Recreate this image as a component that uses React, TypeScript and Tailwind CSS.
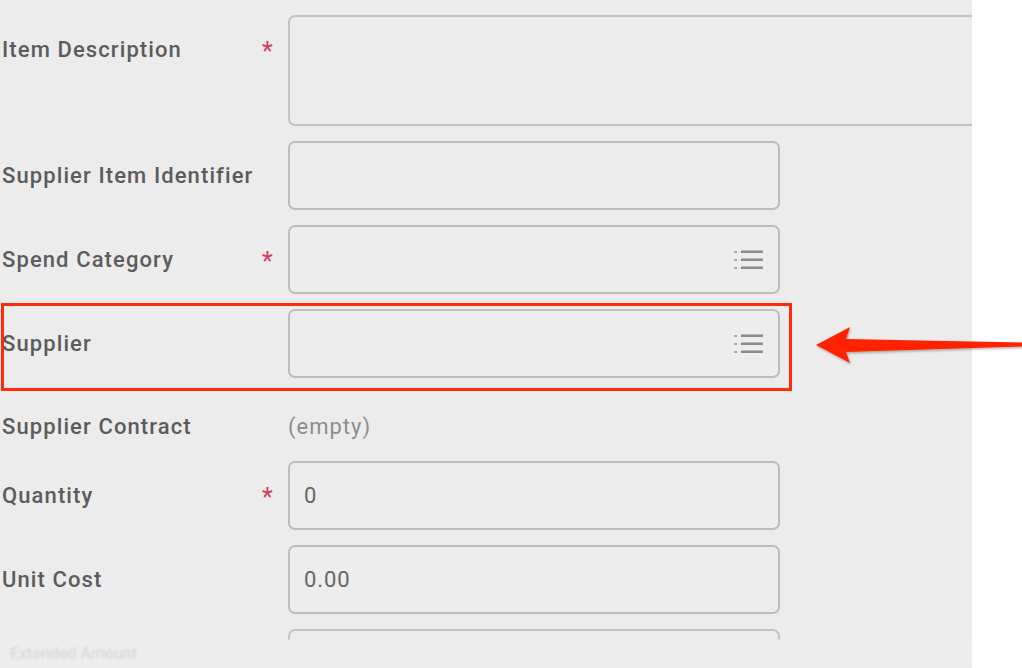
import { useState } from "react";

interface rowInputs {
  label: string;
  required?: boolean;
  children: React.ReactNode;
}

function ListIcon() {
  return (
    <svg width="30" height="22" viewBox="0 0 30 22" className="text-[#8a8a8a]">
      <rect x="0" y="2" width="3" height="2" fill="currentColor" opacity="0.7" />
      <rect x="0" y="10" width="3" height="2" fill="currentColor" opacity="0.7" />
      <rect x="0" y="18" width="3" height="2" fill="currentColor" opacity="0.7" />
      <rect x="7" y="1.5" width="22" height="2.5" fill="currentColor" />
      <rect x="7" y="9.5" width="22" height="2.5" fill="currentColor" />
      <rect x="7" y="17.5" width="22" height="2.5" fill="currentColor" />
    </svg>
  );
}

function Row({ label, required, children }: rowInputs) {
  return (
    <div className="flex items-start">
      <div className="w-[262px] h-[69px] shrink-0 flex items-center pl-[2px] text-[22px] font-medium text-[#5c5c5c] tracking-[1.1px]">
        {label}
      </div>
      <div className="w-[26px] h-[69px] shrink-0 flex items-center pt-[5px] text-[25px] text-[#d5385f]">
        {required ? "*" : ""}
      </div>
      {children}
    </div>
  );
}

function Field({ value, icon }: { value?: string; icon?: boolean }) {
  return (
    <div className="w-[492px] h-[69px] shrink-0 rounded-[7px] border-2 border-[#bdbdbd] bg-[#ededed] flex items-center justify-between pl-[14px] pr-[14px] text-[22px] tracking-[0.9px] text-[#666]">
      <span>{value}</span>
      {icon ? <ListIcon /> : null}
    </div>
  );
}

export default function App() {
  const [desc] = useState("");
  return (
    <div className="w-[1022px] h-[668px] bg-white relative overflow-hidden" style={{ fontFamily: "Roboto, 'Liberation Sans', sans-serif" }}>
      <div className="w-[972px] h-[668px] bg-[#ececec] overflow-hidden pt-[15px] flex flex-col gap-[15px]">
        <Row label="Item Description" required>
          <div className="w-[720px] h-[111px] shrink-0 rounded-[7px] border-2 border-[#c4c4c4] bg-[#ececec]">{desc}</div>
        </Row>
        <Row label="Supplier Item Identifier">
          <Field />
        </Row>
        <Row label="Spend Category" required>
          <Field icon />
        </Row>
        <Row label="Supplier">
          <Field icon />
        </Row>
        <div className="flex items-center h-[53px] pt-[14px]">
          <div className="w-[288px] shrink-0 pl-[2px] text-[22px] font-medium tracking-[1.1px] text-[#5c5c5c]">Supplier Contract</div>
          <div className="text-[22px] tracking-[1px] text-[#8c8c8c]">(empty)</div>
        </div>
        <Row label="Quantity" required>
          <Field value="0" />
        </Row>
        <Row label="Unit Cost">
          <Field value="0.00" />
        </Row>
        <div className="flex flex-col">
          <div className="flex">
            <div className="w-[288px] shrink-0" />
            <div className="w-[492px] h-[11px] rounded-t-[7px] border-2 border-b-0 border-[#c4c4c4]" />
          </div>
          <div className="h-[28px] bg-[#ededed] flex items-center pl-[10px] text-[16px] font-medium text-[#d9d9d9] blur-[1px]">
            Extended Amount
          </div>
        </div>
      </div>

      {/* annotation */}
      <div className="absolute left-[1px] top-[303px] w-[791px] h-[88px] border-[3px] border-[#ff2a0a]" />
      <svg className="absolute left-[810px] top-[322px]" width="212" height="46" viewBox="0 0 212 46">
        <defs>
          <filter id="sh" x="-10%" y="-30%" width="120%" height="160%">
            <feDropShadow dx="1" dy="1.5" stdDeviation="1.2" floodColor="#000" floodOpacity="0.3" />
          </filter>
        </defs>
        <path
          d="M6 23 L40 5 L36 17 L212 20.5 L212 24.5 L36 30 L40 41 Z"
          fill="#ff2200"
          filter="url(#sh)"
        />
      </svg>
    </div>
  );
}
